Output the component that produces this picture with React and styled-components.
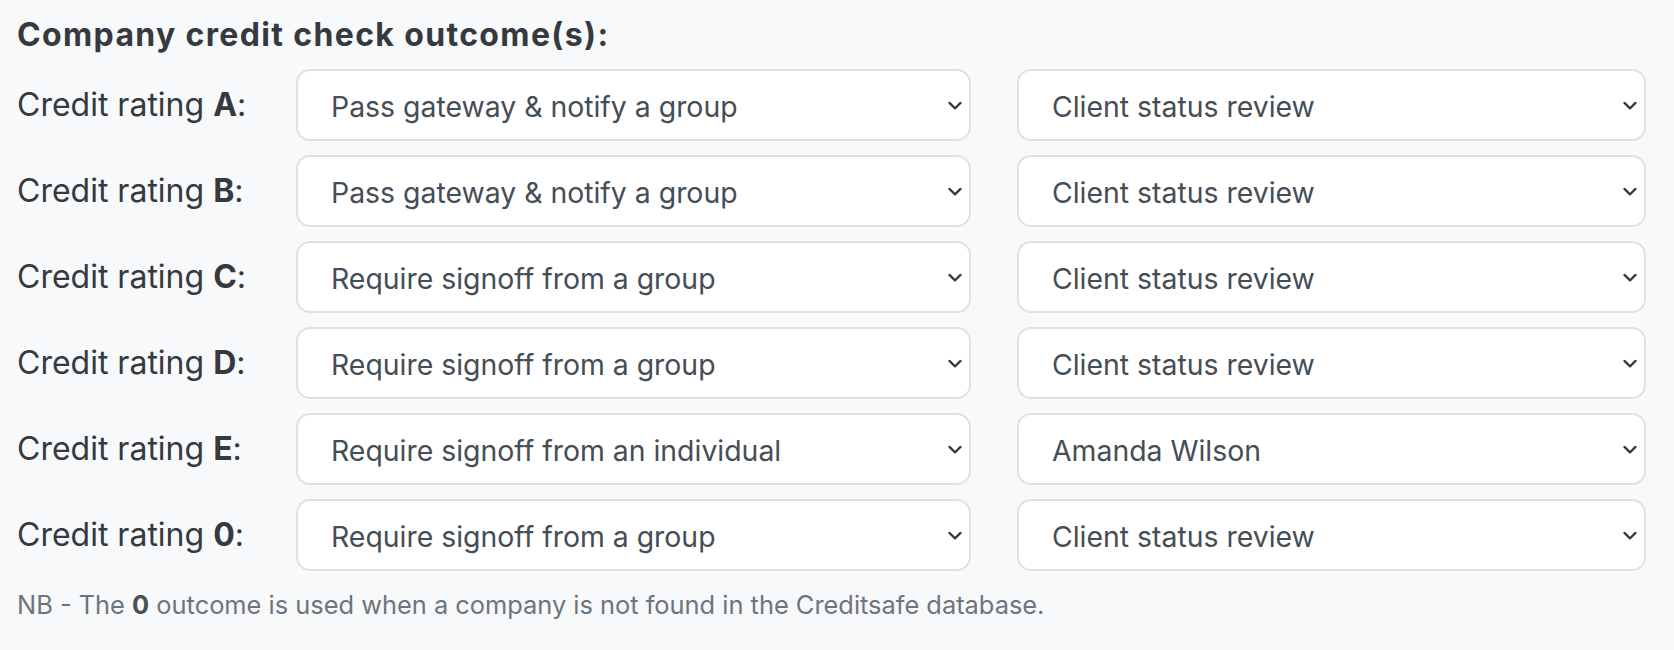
import React from "react";
import styled, { createGlobalStyle } from "styled-components";

const Global = createGlobalStyle`
  html, body { margin: 0; padding: 0; background: #f8f9fa; }
  body { font-family: Inter, "Noto Sans", "Liberation Sans", sans-serif; color: #343a40; }
`;

const Page = styled.div`
  padding: 14px 29px 0 17px;
`;

const Heading = styled.h2`
  margin: 0 0 13px 0;
  font-size: 32px;
  line-height: 42px;
  font-weight: 700;
  letter-spacing: 1.35px;
  color: #343a40;
`;

const Grid = styled.div`
  display: grid;
  grid-template-columns: 233px 675px 629px;
  column-gap: 46px;
  row-gap: 14px;
  align-items: center;
`;

const Label = styled.div`
  font-size: 32px;
  line-height: 40px;
  color: #343a40;
  white-space: nowrap;
  b { font-weight: 700; }
`;

const SelectWrap = styled.div`
  position: relative;
  height: 72px;
`;

const Select = styled.select`
  appearance: none;
  -webkit-appearance: none;
  width: 100%;
  height: 100%;
  box-sizing: border-box;
  border: 2px solid #dee2e6;
  border-radius: 14px;
  background: #ffffff;
  padding: 2px 60px 0 33px;
  font-family: Inter, "Noto Sans", "Liberation Sans", sans-serif;
  font-size: 28.4px;
  color: #454d55;
  outline: none;
`;

const Chevron = styled.svg`
  position: absolute;
  right: 9px;
  top: 50%;
  width: 14px;
  height: 9px;
  transform: translateY(-40%);
  pointer-events: none;
`;

const Note = styled.p`
  margin: 16px 0 0 0;
  font-size: 25.4px;
  line-height: 36px;
  color: #6c757d;
  b { font-weight: 700; color: #495057; }
`;

const rows = [
  ["A", "Pass gateway & notify a group", "Client status review"],
  ["B", "Pass gateway & notify a group", "Client status review"],
  ["C", "Require signoff from a group", "Client status review"],
  ["D", "Require signoff from a group", "Client status review"],
  ["E", "Require signoff from an individual", "Amanda Wilson"],
  ["0", "Require signoff from a group", "Client status review"],
];

const actions = [
  "Pass gateway & notify a group",
  "Require signoff from a group",
  "Require signoff from an individual",
];
const targets = ["Client status review", "Amanda Wilson"];

function Dropdown({ value, options }) {
  return (
    <SelectWrap>
      <Select defaultValue={value}>
        {options.map((o) => (
          <option key={o} value={o}>{o}</option>
        ))}
      </Select>
      <Chevron viewBox="0 0 14 9" fill="none">
        <path d="M1.5 1.5 L7 7 L12.5 1.5" stroke="#343a40" strokeWidth="2.2" strokeLinecap="round" strokeLinejoin="round" />
      </Chevron>
    </SelectWrap>
  );
}

export default function App() {
  return (
    <>
      <Global />
      <Page>
        <Heading>Company credit check outcome(s):</Heading>
        <Grid>
          {rows.map(([r, a, t]) => (
            <React.Fragment key={r}>
              <Label>Credit rating <b>{r}</b>:</Label>
              <Dropdown value={a} options={actions} />
              <Dropdown value={t} options={targets} />
            </React.Fragment>
          ))}
        </Grid>
        <Note>NB - The <b>0</b> outcome is used when a company is not found in the Creditsafe database.</Note>
      </Page>
    </>
  );
}
